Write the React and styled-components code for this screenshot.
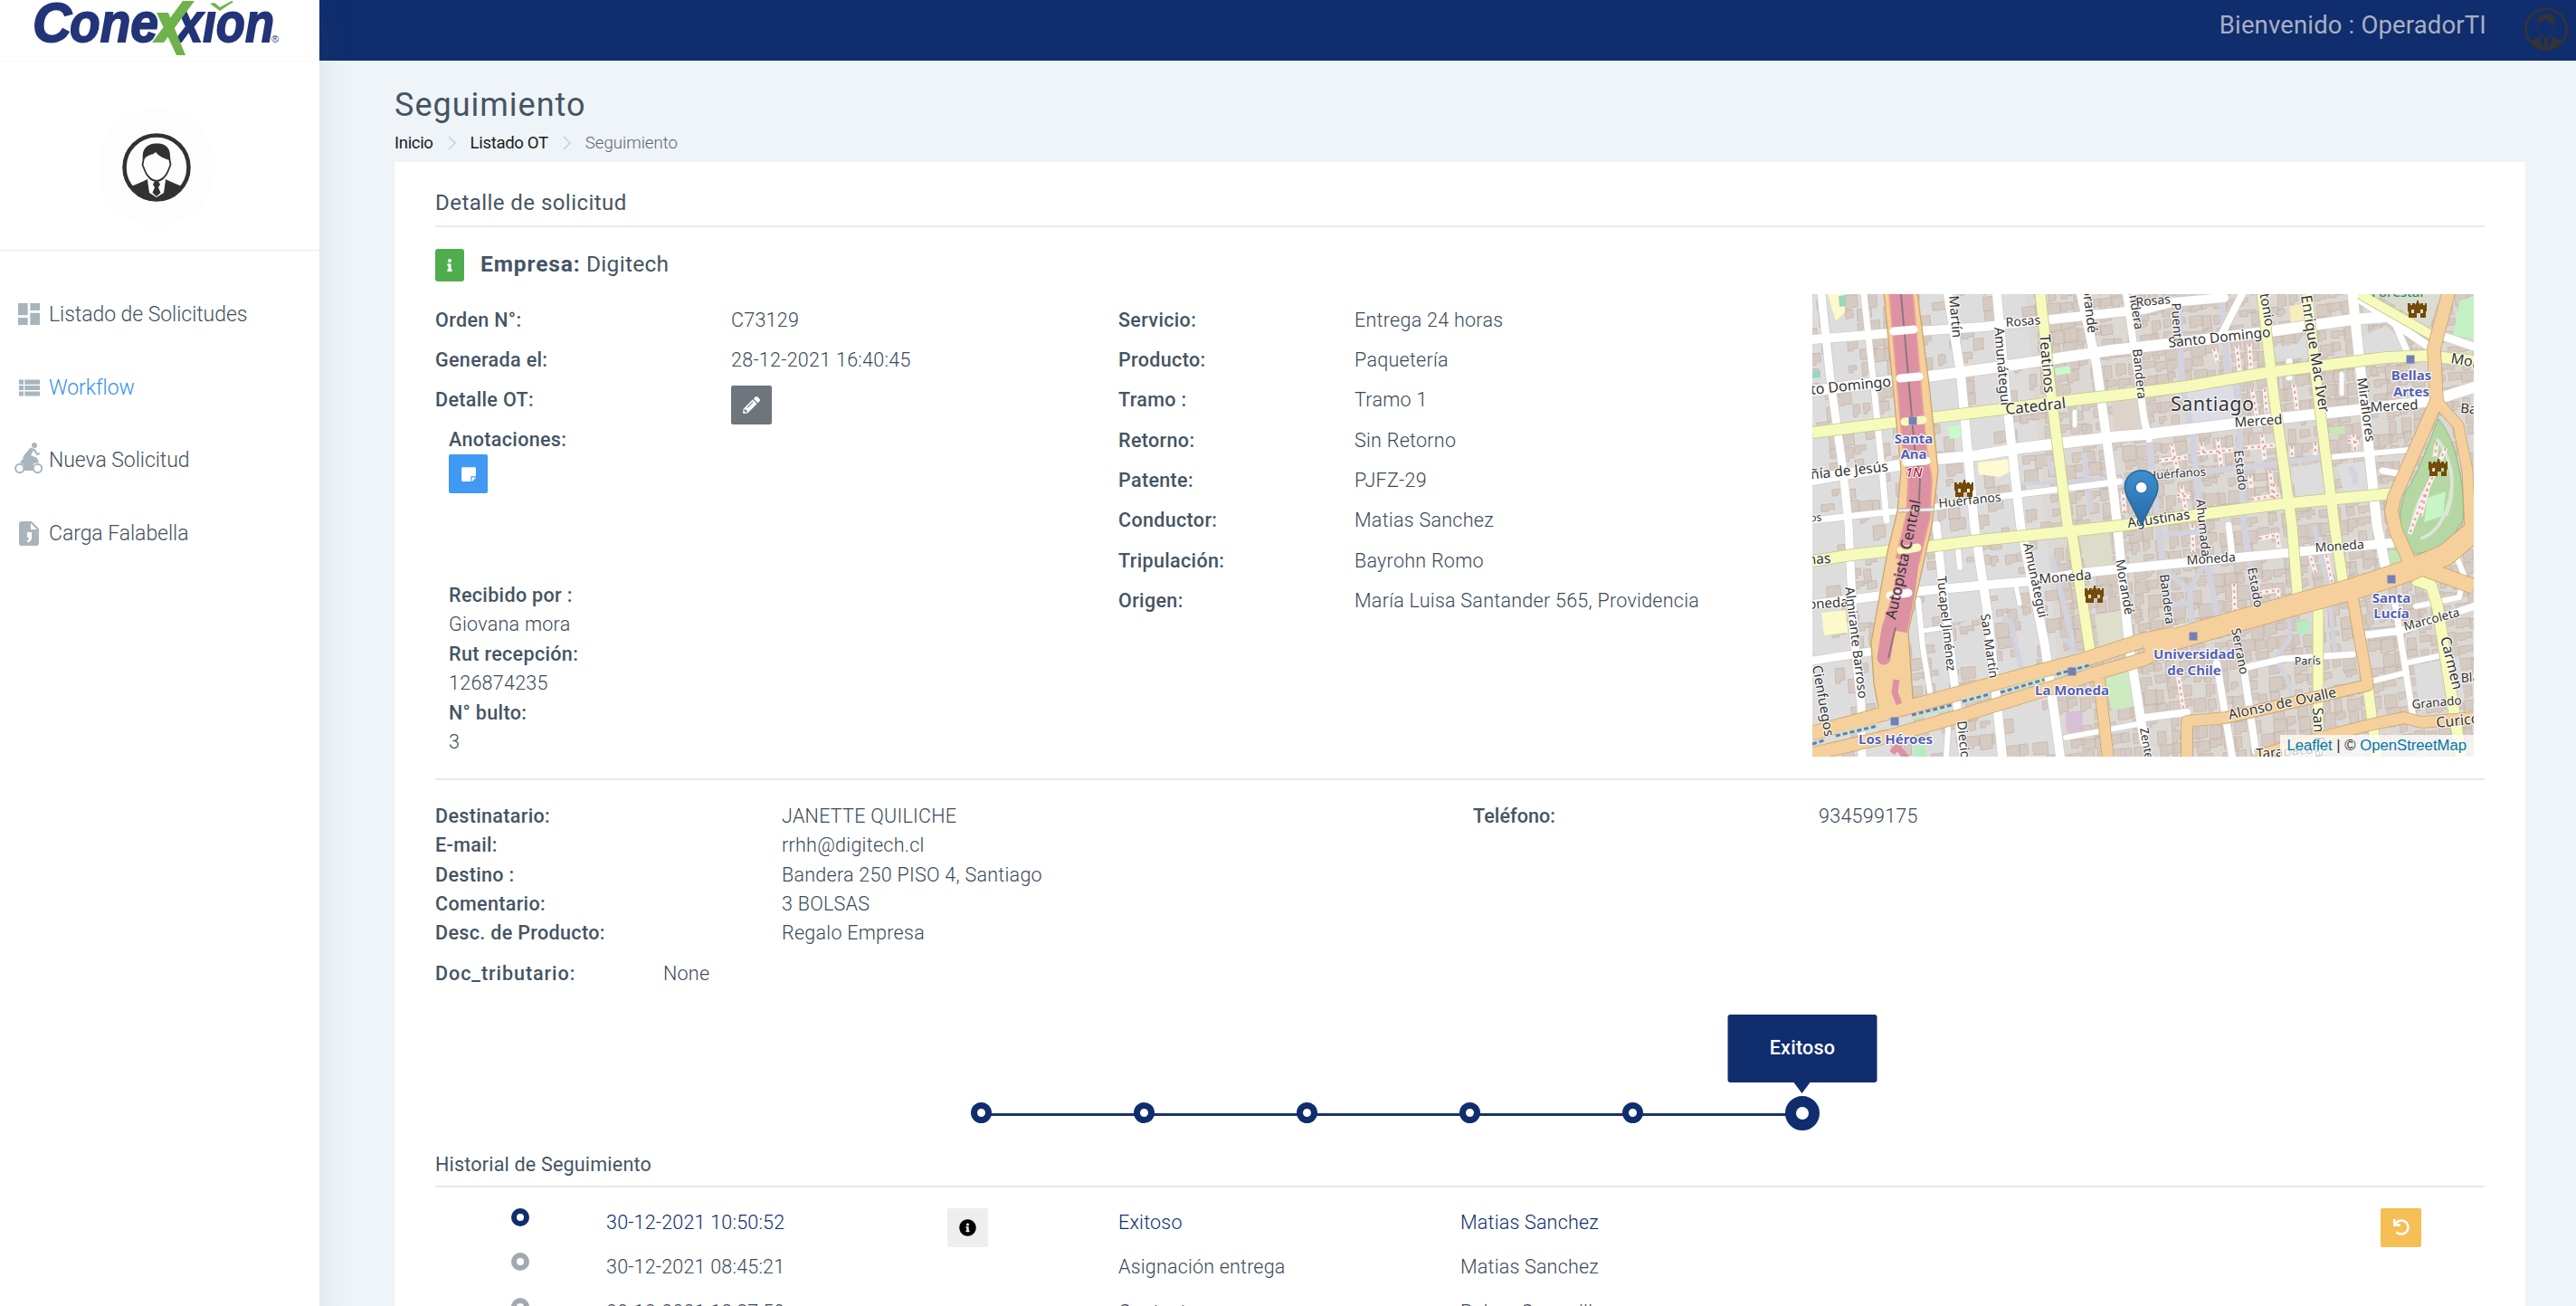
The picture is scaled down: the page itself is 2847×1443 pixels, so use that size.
import React from "react";
import styled, { createGlobalStyle, css } from "styled-components";
import { FaInfo, FaInfoCircle, FaPencilAlt, FaStickyNote, FaUndo } from "react-icons/fa";
import { MdDashboard, MdViewList } from "react-icons/md";

const NAVY = "#102d6e";
const INK = "#3a4958";

const GlobalStyle = createGlobalStyle`
  * { box-sizing: border-box; }
  body {
    margin: 0;
    overflow: hidden;
    background: #eff4f8;
    color: ${INK};
    font-family: Roboto, "Liberation Sans", sans-serif;
    font-size: 21.5px;
    font-weight: 300;
    letter-spacing: 0.27px;
  }
`;

const Page = styled.div`
  display: grid;
  grid-template-columns: 353px 1fr;
  height: 1443px;
  overflow: hidden;
`;

/* ---------- sidebar ---------- */

const Sidebar = styled.aside`
  position: relative;
  z-index: 1;
  background: #fff;
  box-shadow: 2px 0 40px rgba(60, 80, 100, 0.1);
`;

const Brand = styled.div`
  height: 68px;
  padding-left: 38px;
  border-bottom: 1px solid #f8f8f8;
  svg { display: block; }
`;

const Profile = styled.div`
  display: flex;
  align-items: center;
  height: 209px;
  padding: 26px 0 0 108px;
  border-bottom: 1px solid #e8eaeb;
`;

const AvatarHalo = styled.div`
  display: flex;
  align-items: center;
  justify-content: center;
  width: 130px;
  height: 130px;
  border-radius: 50%;
  background: #fdfdfd;
`;

const Nav = styled.nav`
  display: flex;
  flex-direction: column;
  padding-top: 30px;
`;

const NavItem = styled.a`
  display: grid;
  grid-template-columns: 38px 1fr;
  align-items: center;
  height: 80.7px;
  padding-left: 16px;
  font-size: 23px;
  letter-spacing: -0.05px;
  color: ${(p) => (p.$active ? "#3590ec" : "#43515e")};
  svg { color: #a8b5bd; }
`;

const IconSlot = styled.span`
  display: flex;
  padding-left: ${(p) => p.$left || 0}px;
`;

/* ---------- header ---------- */

const Main = styled.main`
  display: flex;
  flex-direction: column;
  min-width: 0;
`;

const Topbar = styled.header`
  display: flex;
  flex: none;
  justify-content: flex-end;
  height: 67px;
  padding: 8px 9px 0 0;
  background: ${NAVY};
`;

const Welcome = styled.span`
  margin-right: 42px;
  line-height: 40px;
  font-size: 27.5px;
  font-weight: 400;
  letter-spacing: 0.15px;
  color: #a7b0c2;
`;

const Heading = styled.div`
  height: 112px;
  padding: 26px 0 0 83px;
`;

const Title = styled.h1`
  margin: 0;
  line-height: 46px;
  font-size: 36px;
  font-weight: 400;
  letter-spacing: 1px;
  color: #455463;
`;

const Crumbs = styled.div`
  display: flex;
  align-items: center;
  height: 38px;
  font-size: 18.6px;
  letter-spacing: -0.3px;
`;

const Crumb = styled.span`
  font-weight: ${(p) => (p.$last ? 300 : 400)};
  letter-spacing: ${(p) => (p.$last ? 0 : -0.35)}px;
  color: ${(p) => (p.$last ? "#5c656d" : "#1c1c1c")};
`;

const Chevron = styled.svg`
  margin: 0 16px;
`;

/* ---------- card ---------- */

const Card = styled.section`
  flex: 1;
  margin: 0 56px 0 83px;
  padding: 0 45px;
  background: #fff;
`;

const SectionHead = styled.div`
  line-height: 40px;
  padding: 25px 0 5px;
  border-bottom: 2px solid #e6e8ea;
  font-weight: 400;
  font-size: 24px;
  letter-spacing: 0.45px;
  color: #455463;
  ${(p) => p.$small && css`
    margin-top: 22px;
    padding: 0 0 7px;
    line-height: 32px;
    font-size: 21.5px;
    letter-spacing: 0.2px;
  `}
`;

const Company = styled.div`
  display: flex;
  align-items: center;
  gap: 18px;
  height: 36px;
  margin-top: 24px;
  font-size: 24.5px;
  font-weight: 400;
  letter-spacing: 0.3px;
  color: #455463;
  b { font-weight: 700; letter-spacing: 0.9px; }
`;

const CompanyName = styled.span`
  padding-bottom: 3px;
`;

const Badge = styled.span`
  display: flex;
  align-items: center;
  justify-content: center;
  width: 32px;
  height: 36px;
  border-radius: 3px;
  background: #50ad4e;
  color: #fff;
`;

const Details = styled.div`
  display: grid;
  grid-template-columns: 755px 767px 731px;
  height: 537px;
  margin-top: 14px;
  border-bottom: 2px solid #e6e8ea;
`;

const Column = styled.div`
  padding-top: 6.5px;
`;

const Row = styled.div`
  display: grid;
  grid-template-columns: ${(p) => p.$label}px auto;
  height: ${(p) => p.$h || 44.4}px;
  line-height: ${(p) => p.$h || 44.4}px;
  white-space: nowrap;
`;

const Label = styled.span`
  font-weight: 500;
  letter-spacing: ${(p) => p.$spacing ?? 0.35}px;
  color: #455463;
`;

const Notes = styled.div`
  display: flex;
  flex-direction: column;
  align-items: flex-start;
  padding: 5px 0 0 15px;
  line-height: 32.4px;
`;

const Receipt = styled(Notes)`
  padding-top: 97px;
`;

const SquareButton = styled.button`
  display: flex;
  align-items: center;
  justify-content: center;
  width: ${(p) => p.$w || 45}px;
  height: 43px;
  margin: ${(p) => p.$top || 0}px 0 0;
  padding: 0;
  border: 0;
  border-radius: 2px;
  background: ${(p) => p.$bg};
  color: ${(p) => p.$fg || "#fff"};
`;

const Recipient = styled.div`
  display: grid;
  grid-template-columns: 1147px 1fr;
  margin-top: 24px;
`;

const Document = styled.div`
  margin-top: 13px;
`;

/* ---------- progress line ---------- */

const Track = styled.div`
  display: flex;
  align-items: center;
  width: 938px;
  height: 38px;
  margin: 118px 0 0 592px;
`;

const Dot = styled.span`
  position: relative;
  flex: none;
  width: ${(p) => p.$size}px;
  height: ${(p) => p.$size}px;
  border: ${(p) => p.$ring}px solid ${(p) => p.$color || NAVY};
  border-radius: 50%;
`;

const Segment = styled.span`
  flex: 1;
  height: 3px;
  margin: 3px -1px 0;
  background: #1b3367;
`;

const Tip = styled.span`
  position: absolute;
  left: 50%;
  bottom: 41px;
  width: 165px;
  height: 75px;
  transform: translateX(-50%);
  border-radius: 3px;
  background: ${NAVY};
  color: #fff;
  line-height: 74px;
  text-align: center;
  font-weight: 500;
  &::after {
    content: "";
    position: absolute;
    left: 73px;
    top: 100%;
    border: solid transparent;
    border-width: 12px 9.5px 0;
    border-top-color: ${NAVY};
  }
`;

/* ---------- history ---------- */

const History = styled.div`
  padding-top: 14px;
`;

const HistoryRow = styled.div`
  display: grid;
  grid-template-columns: 189px 377px 189px 378px 1017px auto;
  height: 49.5px;
  line-height: 50px;
  letter-spacing: 0.2px;
  color: ${(p) => (p.$active ? NAVY : INK)};
`;

const Marker = styled.span`
  display: flex;
  padding: 9px 0 0 84px;
`;

/* ---------- map ---------- */

const MapBox = styled.div`
  position: relative;
  width: 731px;
  height: 511px;
  overflow: hidden;
  font-family: "Noto Sans", "Open Sans", sans-serif;
  letter-spacing: 0;
  svg { display: block; }
`;

const Attribution = styled.div`
  position: absolute;
  right: 0;
  bottom: 0;
  height: 24px;
  padding: 0 8px;
  background: rgba(255, 255, 255, 0.75);
  color: #333;
  font: 400 16.7px/24px "Liberation Sans", Arial, sans-serif;
  span { color: #0078a8; }
`;

const pts = (s) => "M" + s.replace(/ /g, " L").replace(/LM/g, "M");

const WHITE_ROADS = [
  ["0,50 87,43 190,36 300,24 367,17 398,9 455,4", 10],
  ["0,107 77,97 120,92 210,80 330,62 367,58 500,42 597,28 634,25", 12],
  ["0,205 77,192 130,183 184,178 230,170 330,158 367,155 517,137 600,128 684,118 731,103", 12],
  ["0,250 137,235 197,225 277,215 340,207", 7],
  ["574,180 660,172", 6],
  ["0,343 77,333 130,327 184,322 244,317 297,308 367,301 460,292 554,283 640,275", 10],
  ["0,405 64,395", 9],
  ["10,0 20,95 34,195 40,255 46,380 54,455 55,511", 9],
  ["57,0 69,112 77,195 82,250", 7],
  ["150,0 164,88 179,255 194,355 210,511", 10],
  ["204,0 214,112 230,255 257,388 274,511", 10],
  ["297,0 314,78 330,195 337,255 350,388 367,495", 10],
  ["347,0 367,140 372,160", 8],
  ["597,0 607,95 624,255 634,305", 11],
  ["644,342 664,468", 7],
  ["137,255 144,322 160,455 167,511", 9],
  ["117,338 122,390 131,445", 6],
  ["122,372 148,368", 5],
  ["477,413 520,403 597,398", 7],
  ["607,377 650,372 731,345", 8],
  ["617,428 657,418 655,408 700,398", 6],
  ["477,415 490,505", 8],
  ["447,408 464,511", 8],
  ["367,468 414,462", 8],
  ["460,255 464,290", 7],
  ["452,45 475,0", 8],
  ["597,0 634,25 684,60", 9],
  ["645,35 660,70", 7],
  ["684,42 731,58", 9],
  ["630,195 652,199", 7],
  ["150,480 148,511", 6],
  ["280,490 360,475", 6],
  ["585,88 585,110", 5],
  ["527,74 527,92", 7],
  ["161,282 163,302", 6],
  ["225,322 229,342", 5],
  ["290,130 290,145", 5],
  ["667,345 715,335 720,310 712,290", 6],
];

const PEDESTRIAN_ROADS = [
  ["372,160 382,255 397,358", 7],
  ["404,8 409,102 420,155 430,255 447,358", 7],
  ["452,0 459,90 470,105 477,255 490,348", 7],
  ["340,207 427,197 517,187 574,178", 6],
  ["230,210 340,203", 4],
  ["300,175 308,240", 6],
  ["260,178 266,200", 5],
  ["387,266 430,262", 6],
  ["387,302 417,327 432,300 M417,327 420,372 M395,343 417,341", 6],
  ["554,255 570,322", 5],
  ["210,358 219,362 232,418", 6],
  ["265,290 285,372 290,400 M277,382 288,384", 6],
  ["527,358 528,380 512,402 527,430 530,445", 5],
  ["572,345 578,398", 5],
  ["595,190 600,203 599,210", 7],
];

const YELLOW_ROADS = [
  ["0,153 80,143 210,127 280,118 367,108 414,102 500,87 634,70 680,68 731,74", 12],
  ["0,295 44,288 137,278 184,272 284,262 347,255 417,245 517,232 644,220", 12],
  ["252,0 264,112 282,255 287,265 307,395", 11],
  ["497,0 510,112 530,255 537,342", 11],
  ["559,348 559,511", 11],
  ["547,0 557,95 577,255 587,322", 11],
  ["605,0 684,45", 10],
  ["665,315 684,322 691,345 717,511", 12],
  ["614,435 624,511", 11],
];

const ORANGE_ROADS = [
  ["0,485 74,465 137,448 230,422 297,405 367,382 400,375", 15],
  ["0,508 87,488 157,468 264,435 310,420 367,403 400,388", 14],
  ["367,391 467,362 527,345 600,325 660,305 700,288 731,262", 23],
  ["667,300 731,323", 16],
  ["704,-5 687,60 690,118 643,225 640,240 645,262 660,295", 14],
  ["690,118 714,145 724,195 727,260", 11],
  ["414,515 414,472 457,468 527,452 614,432 597,335", 12],
  ["490,510 580,485 620,475 654,468 674,473 731,468", 12],
  ["317,425 327,515", 12],
];

const AREAS = [
  ["M149 148 L165 143 L167 158 L152 160Z", "#c8facc"],
  ["M268 82 L284 79 L286 87 L269 90Z", "#c8facc"],
  ["M535 362 L549 360 L550 374 L536 376Z", "#b5ecc0"],
  ["M571 148 L588 145 L589 154 L573 156Z", "#cbe6b0"],
  ["M183 186 L219 182 L219 196 L207 202 L184 199Z", "#fdfbcf"],
  ["M10 352 L37 349 L39 374 L13 377Z", "#fbfac8"],
  ["M17 0 L35 0 L36 20 L26 30Z", "#fbfac8"],
  ["M29 2 L37 1 L37 13 L30 14Z", "#99d6bd"],
  ["M0 85 L9 84 L9 92 L0 93Z", "#99d6bd"],
  ["M294 266 L328 262 L333 300 L302 304Z", "#dcdccb"],
  ["M323 424 L357 414 L359 455 L331 460Z", "#cdebc0"],
  ["M312 354 L343 350 L346 388 L317 392Z", "#dedfcb"],
  ["M331 120 L364 114 L368 152 L335 158Z", "#ddd3c8"],
  ["M280 463 L299 461 L298 482 L281 484Z", "#d7bfd7"],
  ["M112 500 L124 498 L126 511 L114 511Z", "#b5ecc0"],
  ["M625 0 L694 0 L682 38Z", "#d9ddd0"],
  ["M715 8 L731 2 L731 50 L708 46Z", "#c2f2c4"],
  ["M413 108 L465 100 L469 137 L420 145Z", "#dddde8"],
  ["M527 13 L543 11 L545 28 L529 31Z", "#f6eebb"],
  ["M637 282 L655 285 L650 303 L638 302Z", "#c2e8b8"],
];

const seeded = (seed) => () => {
  seed = (seed * 16807) % 2147483647;
  return seed / 2147483647;
};

const makeBuildings = () => {
  const rnd = seeded(4242);
  const out = [];
  for (let y = -10; y < 590; y += 15) {
    for (let x = -10; x < 790; x += 14) {
      const dense = x > 235 ? 0.86 : 0.4;
      if (rnd() > dense) continue;
      const w = 7 + rnd() * 10;
      const h = 7 + rnd() * 10;
      const px = x + rnd() * 3 + y * 0.08;
      const py = y + rnd() * 3 - x * 0.1;
      const cut = rnd() * 4;
      out.push(`M${px.toFixed(1)} ${py.toFixed(1)}l${w.toFixed(1)} ${(-w * 0.1).toFixed(1)}l1 ${(h - cut).toFixed(1)}l${(-w / 2).toFixed(1)} .5v${cut.toFixed(1)}l${(-w / 2).toFixed(1)} .6z`);
    }
  }
  return out.join("");
};
const BUILDINGS = makeBuildings();

const FOOTPATHS = [
  "M469 57 L473 90 M483 55 L485 85 M444 60 L448 75 M532 100 L536 128",
  "M486 105 L492 138 M500 105 L502 130 M397 165 L405 200 M383 184 L415 180 M430 165 L433 178 M425 176 L465 172 M448 160 L452 190",
  "M478 170 L512 167 M497 155 L500 183 M530 168 L530 180 M556 164 L556 180 M598 155 L600 172 M592 162 L604 164",
  "M408 212 L413 240 M403 222 L418 224 M484 200 L485 215 M506 195 L509 225 M485 227 L517 222 M510 210 L511 235",
  "M466 320 L467 350 M390 372 L470 353 M494 330 L515 327 L515 340 M549 285 L556 308 M568 288 L575 322 M420 255 L421 285",
  "M364 119 L367 155 M343 218 L345 240 M494 270 L514 266 L516 282 M404 420 L412 470 M700 170 L675 225 L660 265 M690 165 L688 180 M680 215 L672 245",
];

const LABELS = [
  ["Martín", 151, 2, 85, 15], ["Amunátegui", 201, 37, 85, 15], ["Teatinos", 251, 45, 85, 16.5], ["Morandé", 297, -20, 83, 15],
  ["Bandera", 347, -15, 80, 14], ["Bandera", 354, 61, 84, 14], ["Rosas", 214, 36, -4, 14], ["Rosas", 358, 14, -6, 14],
  ["Santo Domingo", -29, 114, -6, 16], ["Catedral", 214, 133, -6, 17], ["Compañía de Jesús", -53, 210, -6, 15.5],
  ["Huérfanos", 140, 236, -6, 14], ["Huérfanos", 371, 205, -4, 13], ["nos", -10, 252, -4, 12],
  ["Puente", 397, 10, 87, 14], ["Santo Domingo", 394, 59, -6, 15.5], ["San Antonio", 486, -48, 80, 15], ["Enrique Mac Iver", 540, 2, 81, 16.5],
  ["Miraflores", 602, 93, 82, 15], ["Merced", 467, 147, -4, 15], ["Merced", 617, 130, -3, 15], ["Monjitas", 705, 76, 10, 16], ["Barros", 716, 131, 4, 15],
  ["Agustinas", 349, 258, -8, 15], ["Agustinas", -51, 302, -4, 15.5], ["Ahumada", 424, 227, 84, 14], ["Estado", 466, 173, 83, 14],
  ["Moneda", -18, 349, -4, 15], ["Moneda", 251, 320, -5, 15], ["Moneda", 414, 299, -4, 14], ["Moneda", 556, 285, -4, 14],
  ["Amunátegui", 233, 276, 78, 14.5], ["Tucapel Jiménez", 138, 312, 84, 14], ["San Martín", 186, 354, 82, 14], ["Almirante Barroso", 36, 324, 83, 14.5],
  ["Cienfuegos", 0, 411, 80, 15], ["Dieciocho", 160, 472, 84, 14.5], ["Morandé", 335, 294, 80, 14.5], ["Bandera", 384, 310, 83, 14], ["Estado", 481, 303, 80, 14],
  ["Serrano", 463, 370, 79, 14], ["París", 533, 410, -2, 12.5], ["Marcoleta", 655, 372, -15, 13.5], ["Carmen", 694, 380, 76, 16], ["Granado", 663, 458, -5, 13.5],
  ["Alonso de Ovalle", 461, 470, -12, 15.5], ["Curicó", 690, 479, -6, 16], ["San Francisco", 553, 457, 87, 16], ["Tarapacá", 491, 513, -5, 15],
  ["Blanco", 717, 429, -3, 14], ["Zenteno", 362, 480, 80, 13],
];

const STATIONS = [
  [["Santa", 112, 165], ["Ana", 112, 182], 111, 140],
  [["Bellas", 662, 95], ["Artes", 662, 113], 661, 72],
  [["Universidad", 422, 403], ["de Chile", 422, 421], 421, 378],
  [["Santa", 640, 341], ["Lucía", 640, 358], 640, 315],
  [["La Moneda", 287, 443], null, 287, 417],
  [["Los Héroes", 92, 497], null, 91, 472],
];

const Castle = ({ x, y }) => (
  <path transform={`translate(${x} ${y})`} fill="#734a08" d="M0 3h3v2h2V3h3v2l2-3V0h2v2l2 3V3h3v2h2V3h2v9h-1v7h-6v-5h-4v5H1v-7H0zM4 10v4h3v-4zM14 10v4h3v-4z" />
);

const CityMap = () => (
  <MapBox>
    <svg width="731" height="511" viewBox="0 0 731 511" fill="none" strokeLinejoin="round">
      <rect width="731" height="511" fill="#dedddd" />
      <path d="M235 0H731V511H280Z" fill="#dcd8d4" />
      <path d={BUILDINGS} fill="#d6cbc3" stroke="#c6b9af" strokeWidth="0.9" />
      <path d="M504 60l32-5l7-10l14 2l4 20l-40 6zM608 46l26-11l18 16l2 16l-44 6zM531 192l30-6l8 38l-34 8zM580 188l38-4l6 34l-36 4zM665 410l50-10l6 50l-50 8zM140 300l40-4l10 62l-40 6z" fill="#dedddd" />
      {AREAS.map(([d, fill]) => <path key={d} d={d} fill={fill} />)}
      <path d="M692 138 C712 160 722 215 719 250 C705 275 690 285 665 287 C650 270 645 250 655 220 C672 195 680 165 692 138Z" fill="#b4d7a4" stroke="#8fbc82" />
      <path d="M690 160 C708 180 712 220 700 245 M705 190 C712 215 700 262 672 270 M700 170 C685 210 665 225 662 262" stroke="#dbe6d6" strokeWidth="3.5" />
      <path d="M680 225 L700 218 L697 245 L676 252Z" fill="#c8f5c6" />
      {FOOTPATHS.map((d) => (
        <g key={d}>
          <path d={d} stroke="#f7f2f0" strokeWidth="5" />
          <path d={d} stroke="#ee9a96" strokeWidth="2" strokeDasharray="3 4" />
        </g>
      ))}
      {PEDESTRIAN_ROADS.map(([p, w]) => <path key={p} d={pts(p)} stroke="#d3d3df" strokeWidth={w} />)}
      {WHITE_ROADS.map(([p, w]) => <path key={p} d={pts(p)} stroke="#cfcbc8" strokeWidth={w + 1.4} strokeLinecap="round" />)}
      {WHITE_ROADS.map(([p, w]) => <path key={p} d={pts(p)} stroke="#fff" strokeWidth={w} strokeLinecap="round" />)}
      {YELLOW_ROADS.map(([p, w]) => <path key={p} d={pts(p)} stroke="#c3c78d" strokeWidth={w + 1.6} />)}
      {YELLOW_ROADS.map(([p, w]) => <path key={p} d={pts(p)} stroke="#f6fabb" strokeWidth={w} />)}
      {ORANGE_ROADS.map(([p, w]) => <path key={p} d={pts(p)} stroke="#cba56b" strokeWidth={w + 1.6} />)}
      <path d="M79 -2 L88 90 L98 195 L94 240 L83 285 L65 385 L68 430 L76 472 L112 460 L106 372 L120 310 L132 255 L139 195 L129 100 L116 -2Z" fill="#f6d09b" stroke="#cba56b" strokeWidth="1.3" />
      {ORANGE_ROADS.map(([p, w]) => <path key={p} d={pts(p)} stroke="#f5d09c" strokeWidth={w} />)}
      <path d="M98 -2 L106 90 L113 170 L119 205 L117 245 L105 295" stroke="#f0a88e" strokeWidth="28" />
      <path d="M98 -2 L106 90 L113 170 L119 205 L117 245 L105 295" stroke="#dc92a3" strokeWidth="25" />
      <path d="M105 290 L97 330 L84 370 L79 402" stroke="#dc92a3" strokeWidth="15" strokeLinecap="round" />
      <path d="M112 290 L107 330 L98 373" stroke="#dc92a3" strokeWidth="13" />
      <path d="M93 426 L91 440 L96 453 M88 507 L94 500 L105 514" stroke="#dc92a3" strokeWidth="7" />
      <path d="M98 0 L106 90 L113 170 L119 205 L117 245 M92 368 L84 402" stroke="#8f777d" strokeWidth="2" />
      <path d="M90 41 L112 39 M97 93 L118 91 M104 186 L126 184 M86 333 L106 330" stroke="#fff" strokeWidth="9" strokeLinecap="round" />
      <path d="M102 141 L122 139 M98 283 L116 280" stroke="#f6fabb" strokeWidth="9" strokeLinecap="round" />
      <path d="M95 239 L134 238" stroke="#b7aaa7" strokeWidth="5" />
      <path d="M95 239 L134 238" stroke="#eee" strokeWidth="3" />
      <path d="M110 467 L154 456 M166 450 L196 442 M208 440 L256 426 M270 420 L306 410 M0 497 L13 493 M26 488 L72 477" stroke="#c9e4c9" strokeWidth="6" />
      <path d="M110 465 L154 454 M166 450 L196 442 M208 440 L256 426 M270 420 L306 410 M0 497 L13 493 M26 488 L72 477" stroke="#6a78b8" strokeWidth="3" strokeDasharray="5 3" />
      <g fill="#333" stroke="#fff" strokeWidth="2.4" strokeOpacity="0.75" paintOrder="stroke">
        {LABELS.map(([t, x, y, r, s]) => (
          <text key={t + x + y} transform={`translate(${x} ${y}) rotate(${r})`} fontSize={s} fontWeight="400">{t}</text>
        ))}
        <text transform="translate(396 129)" fontSize="21.5" fontWeight="400" textLength="92">Santiago</text>
        <text transform="translate(92 360) rotate(-78)" fontSize="16.5" fontWeight="400" stroke="#dc92a3">Autopista Central</text>
      </g>
      <text x="103" y="202" fontSize="14.5" fontStyle="italic" fontWeight="500" fill="#a3203b" stroke="#fff" strokeWidth="2" paintOrder="stroke">1N</text>
      <text x="618" y="3" fontSize="15" fill="#2f8f5b" fontWeight="500">Forestal</text>
      {STATIONS.map(([a, b, x, y]) => (
        <g key={a[0] + y} fill="#5560b5" stroke="#fff" strokeWidth="2.4" paintOrder="stroke" fontSize="15" fontWeight="700" textAnchor="middle">
          <rect x={x - 4.5} y={y - 4.5} width="9" height="9" fill="#7380b8" stroke="none" />
          <text x={a[1]} y={a[2]}>{a[0]}</text>
          {b && <text x={b[1]} y={b[2]}>{b[0]}</text>}
        </g>
      ))}
      <Castle x={157} y={205} />
      <Castle x={301} y={322} />
      <Castle x={658} y={7} />
      <Castle x={681} y={182} />
      <defs>
        <linearGradient id="pin" x1="0" y1="0" x2="0" y2="1">
          <stop offset="0" stopColor="#3d8fd1" />
          <stop offset="1" stopColor="#2769a6" />
        </linearGradient>
      </defs>
      <g transform="translate(344.5 194) scale(1.53)">
        <path d="M12.5 .6C5.9.6.6 5.9.6 12.4c0 3.2 1.1 6.3 2.6 8.9L12.5 40l9.3-18.7c1.5-2.6 2.6-5.7 2.6-8.9C24.4 5.9 19.1.6 12.5.6z" fill="url(#pin)" stroke="#2e6c97" strokeWidth="1.1" />
        <circle cx="12.5" cy="12.8" r="4.2" fill="#fff" stroke="#2e6c97" strokeWidth=".7" />
      </g>
    </svg>
    <Attribution><span>Leaflet</span> | © <span>OpenStreetMap</span></Attribution>
  </MapBox>
);

/* ---------- drawings ---------- */

const Logo = () => (
  <svg width="275" height="64" viewBox="0 0 275 64" fontFamily='"Liberation Sans", Arial, sans-serif' fontWeight="700" fontStyle="italic" letterSpacing="0">
    <g fill="#233478" stroke="#233478" strokeWidth="1.8">
      <text x="-2" y="46" fontSize="61" textLength="43" lengthAdjust="spacingAndGlyphs">C</text>
      <text x="39" y="46" fontSize="61" textLength="98" lengthAdjust="spacingAndGlyphs">one</text>
      <text x="157" y="46" fontSize="61" textLength="108" lengthAdjust="spacingAndGlyphs">xıon</text>
    </g>
    <path d="M164 1h13l-34 46h-13z M135 14h13l19 47h-10z" fill="#6fb24c" />
    <path d="M194 4l5-1 6 5 13-7 2 1-15 10z" fill="#6fb24c" />
    <text x="262" y="47" fontSize="11" fontStyle="normal" fontWeight="400" fill="#233478">®</text>
  </svg>
);

const Avatar = ({ size, color, blank }) => (
  <svg width={size} height={size} viewBox="0 0 76 76" fill="none">
    <circle cx="38" cy="38" r="35.5" fill={blank} stroke={color} strokeWidth="4.5" />
    <path d="M10 59 C16 56 23 54 28 51 L38 68 L48 51 C53 54 60 56 66 59 C60 69 50 74 38 74 C26 74 16 69 10 59Z" fill={color} />
    <path d="M28 52 L31 51 L38 56 L45 51 L48 52 L46 66 L38 71 L30 66Z" fill={blank} />
    <path d="M35.5 54h5l1.5 3-2 3 2.5 6-4.5 4-4.5-4 2.5-6-2-3z" fill={color} />
    <path d="M23.5 30 C23 12 53 12 52.5 30 L53.5 35 L51.5 40 C49 48 43 53 38 53 C33 53 27 48 24.5 40 L22.5 35Z" fill={blank} stroke={color} strokeWidth="1.8" />
    <path d="M23.5 31 C20 16 30 11 39 11.5 C48 11.5 55 17 52.5 30 C46 28 41 26 37 21 C34 25 26 23 23.5 31Z" fill={color} />
  </svg>
);

const BikerIcon = () => (
  <svg width="31" height="41" viewBox="0 0 31 41" fill="none" stroke="currentColor">
    <circle cx="5.8" cy="29.5" r="4.7" strokeWidth="2" />
    <circle cx="25.5" cy="29.5" r="4.7" strokeWidth="2" />
    <circle cx="22" cy="4" r="3" fill="currentColor" stroke="none" />
    <path d="M10 18 L18 8 L22 9 L25 14 L28 13" strokeWidth="2.2" />
    <path d="M6 23 C8 20 10 20 10 16 L17 8 L21 10 L18 15 L25 18 L27 23 L21 24 L20 32 L11 32 L10 25Z" fill="currentColor" stroke="none" />
  </svg>
);

const FileIcon = () => (
  <svg width="22" height="27" viewBox="0 0 22 27">
    <path d="M3 0h11l8 8v16a3 3 0 0 1-3 3H3a3 3 0 0 1-3-3V3a3 3 0 0 1 3-3z" fill="currentColor" />
    <path d="M13 2v7h7z M9 12h5v6c0 3-2 5-5 5v-2c1.5 0 2-1 2-3H9z" fill="#fff" />
  </svg>
);

/* ---------- data ---------- */

const SERVICE = [
  ["Servicio:", "Entrega 24 horas"],
  ["Producto:", "Paquetería"],
  ["Tramo :", "Tramo 1"],
  ["Retorno:", "Sin Retorno"],
  ["Patente:", "PJFZ-29"],
  ["Conductor:", "Matias Sanchez"],
  ["Tripulación:", "Bayrohn Romo"],
  ["Origen:", "María Luisa Santander 565, Providencia"],
];

const RECIPIENT = [
  ["Destinatario:", "JANETTE QUILICHE"],
  ["E-mail:", "rrhh@digitech.cl"],
  ["Destino :", "Bandera 250 PISO 4, Santiago"],
  ["Comentario:", "3 BOLSAS"],
  ["Desc. de Producto:", "Regalo Empresa"],
];

const HISTORY = [
  ["30-12-2021 10:50:52", "Exitoso", "Matias Sanchez"],
  ["30-12-2021 08:45:21", "Asignación entrega", "Matias Sanchez"],
  ["29-12-2021 18:37:59", "Contacto", "Ruben Carmailla"],
];

const Pair = ({ label, value, width, height, spacing }) => (
  <Row $label={width} $h={height}>
    <Label $spacing={spacing}>{label}</Label>
    <span>{value}</span>
  </Row>
);

const CrumbArrow = () => (
  <Chevron width="9" height="16" viewBox="0 0 9 16" fill="none" stroke="#c5ccd2" strokeWidth="1.3">
    <path d="M1 1l7 7-7 7" />
  </Chevron>
);

export default function App() {
  return (
    <>
      <GlobalStyle />
      <Page>
        <Sidebar>
          <Brand><Logo /></Brand>
          <Profile>
            <AvatarHalo><Avatar size={76} color="#323232" blank="#fdfdfd" /></AvatarHalo>
          </Profile>
          <Nav>
            <NavItem><MdDashboard size={32} />Listado de Solicitudes</NavItem>
            <NavItem $active><IconSlot $left={1}><MdViewList size={31} /></IconSlot>Workflow</NavItem>
            <NavItem><BikerIcon />Nueva Solicitud</NavItem>
            <NavItem><IconSlot $left={5}><FileIcon /></IconSlot>Carga Falabella</NavItem>
          </Nav>
        </Sidebar>
        <Main>
          <Topbar>
            <Welcome>Bienvenido : OperadorTI</Welcome>
            <Avatar size={48} color="#343338" blank={NAVY} />
          </Topbar>
          <Heading>
            <Title>Seguimiento</Title>
            <Crumbs>
              <Crumb>Inicio</Crumb><CrumbArrow />
              <Crumb>Listado OT</Crumb><CrumbArrow />
              <Crumb $last>Seguimiento</Crumb>
            </Crumbs>
          </Heading>
          <Card>
            <SectionHead>Detalle de solicitud</SectionHead>
            <Company>
              <Badge><FaInfo size={14} /></Badge>
              <CompanyName><b>Empresa:</b> Digitech</CompanyName>
            </Company>
            <Details>
              <Column>
                <Pair label="Orden N°:" value="C73129" width={327} />
                <Pair label="Generada el:" value="28-12-2021 16:40:45" width={327} />
                <Row $label={327}>
                  <Label>Detalle OT:</Label>
                  <SquareButton $bg="#6e757d" $top={6}><FaPencilAlt size={19} /></SquareButton>
                </Row>
                <Notes>
                  <Label>Anotaciones:</Label>
                  <SquareButton $bg="#4099f3" $w={43}><FaStickyNote size={18} /></SquareButton>
                </Notes>
                <Receipt>
                  <Label>Recibido por :</Label><span>Giovana mora</span>
                  <Label>Rut recepción:</Label><span>126874235</span>
                  <Label>N° bulto:</Label><span>3</span>
                </Receipt>
              </Column>
              <Column>
                {SERVICE.map(([l, v]) => <Pair key={l} label={l} value={v} width={261} />)}
              </Column>
              <CityMap />
            </Details>
            <Recipient>
              <div>{RECIPIENT.map(([l, v]) => <Pair key={l} label={l} value={v} width={383} height={32.3} />)}</div>
              <div><Pair label="Teléfono:" value="934599175" width={382} height={32.3} spacing={0.1} /></div>
            </Recipient>
            <Document><Pair label="Doc_tributario:" value="None" width={252} height={32.3} spacing={0.95} /></Document>
            <Track>
              {[0, 1, 2, 3, 4].map((n) => (
                <React.Fragment key={n}>
                  <Dot $size={23} $ring={7} />
                  <Segment />
                </React.Fragment>
              ))}
              <Dot $size={38} $ring={12}><Tip>Exitoso</Tip></Dot>
            </Track>
            <SectionHead $small>Historial de Seguimiento</SectionHead>
            <History>
              {HISTORY.map(([date, state, who], i) => (
                <HistoryRow key={date} $active={i === 0}>
                  <Marker><Dot $size={20} $ring={6} $color={i === 0 ? NAVY : "#a3a9b0"} /></Marker>
                  <span>{date}</span>
                  <span>{i === 0 && <SquareButton $bg="#eee" $fg="#000" $top={9}><FaInfoCircle size={19} /></SquareButton>}</span>
                  <span>{state}</span>
                  <span>{who}</span>
                  <span>{i === 0 && <SquareButton $bg="#f5bf55" $top={9}><FaUndo size={18} /></SquareButton>}</span>
                </HistoryRow>
              ))}
            </History>
          </Card>
        </Main>
      </Page>
    </>
  );
}
